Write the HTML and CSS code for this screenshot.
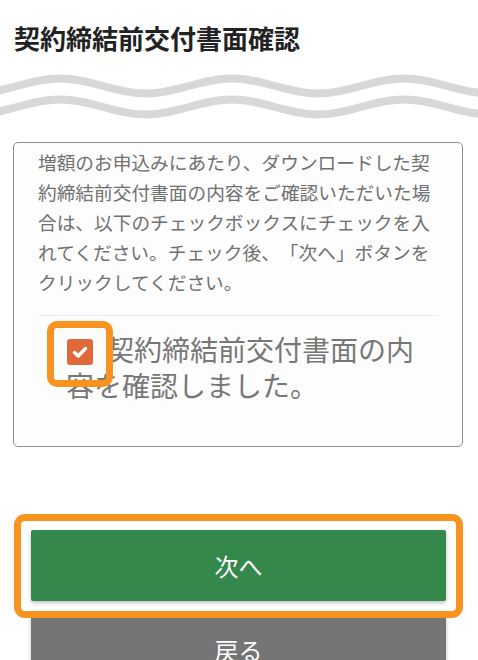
FILE: index.html
```html
<!DOCTYPE html>
<html lang="ja">
<head>
<meta charset="utf-8">
<title>契約締結前交付書面確認</title>
<link rel="stylesheet" href="styles.css">
</head>
<body>
<h1 class="title">契約締結前交付書面確認</h1>
<div class="waves">
  <svg width="478" height="70" viewBox="0 0 478 70" aria-hidden="true">
    <g fill="none" stroke="#d8d8d8" stroke-width="8">
      <path d="M -26 37.5 C 5.3 37.5 28.7 22.5 60 22.5 S 114.7 37.5 146 37.5 S 200.7 22.5 232 22.5 S 286.7 37.5 318 37.5 S 372.7 22.5 404 22.5 S 458.7 37.5 490 37.5"/>
      <path transform="translate(0 21)" d="M -26 37.5 C 5.3 37.5 28.7 22.5 60 22.5 S 114.7 37.5 146 37.5 S 200.7 22.5 232 22.5 S 286.7 37.5 318 37.5 S 372.7 22.5 404 22.5 S 458.7 37.5 490 37.5"/>
    </g>
  </svg>
</div>
<section class="card">
  <p class="notice">増額のお申込みにあたり、ダウンロードした契約締結前交付書面の内容をご確認いただいた場合は、以下のチェックボックスにチェックを入れてください。チェック後、「次へ」ボタンをクリックしてください。</p>
  <hr class="sep">
  <label class="agree"><span class="checkbox"><svg width="26" height="26" viewBox="0 0 26 26" aria-hidden="true"><path d="M7.5 13.5 L11.2 17 L18.5 9.5" fill="none" stroke="#fff" stroke-width="3.4" stroke-linecap="round" stroke-linejoin="round"/></svg><span class="highlight"></span></span>契約締結前交付書面の内容を確認しました。</label>
</section>
<div class="actions">
  <div class="btn-wrap">
    <button class="btn next" type="button">次へ</button>
    <span class="highlight frame"></span>
  </div>
  <button class="btn back" type="button">戻る</button>
</div>
</body>
</html>
```
FILE: styles.css
```css
html, body {
  margin: 0;
  padding: 0;
  background: #ffffff;
}
body {
  width: 478px;
  font-family: "Noto Sans CJK JP", "Noto Sans", sans-serif;
  overflow: hidden;
  text-spacing-trim: space-all;
}
.title {
  margin: 0;
  padding: 20px 0 0 14px;
  font-size: 26px;
  line-height: 36px;
  font-weight: 700;
  color: #222222;
}
.waves {
  height: 70px;
}
.waves svg {
  display: block;
}
.card {
  margin: 16px 15px 0 13px;
  padding: 4px 24px 43px 24px;
  border: 1px solid #8f8f8f;
  border-radius: 5px;
  background: #fdfdfd;
}
.notice {
  margin: 0;
  font-size: 18.7px;
  line-height: 30px;
  color: #707070;
}
.sep {
  margin: 18px 0 15px;
  height: 0;
  border: 0;
  border-top: 1px solid #ececec;
}
.agree {
  display: block;
  padding-left: 28px;
  font-size: 28px;
  line-height: 36px;
  color: #777777;
}
.checkbox {
  position: relative;
  display: inline-block;
  width: 26px;
  height: 26px;
  margin: 0 13px 0 1px;
  vertical-align: -4px;
  background: #e0693b;
  border-radius: 3px;
}
.checkbox svg {
  display: block;
}
.highlight {
  position: absolute;
  left: -20px;
  top: -18px;
  width: 66px;
  height: 66px;
  box-sizing: border-box;
  border: 7px solid #f7931e;
  border-radius: 10px;
}
.actions {
  margin-top: 83px;
  padding: 0 32px 0 31px;
  display: flex;
  flex-direction: column;
  gap: 13px;
}
.btn-wrap {
  position: relative;
}
.btn {
  display: block;
  width: 100%;
  height: 71px;
  border: 0;
  border-radius: 2px;
  font-family: "Noto Sans CJK JP", "Noto Sans", sans-serif;
  font-size: 24px;
  color: #ffffff;
  box-shadow: 0 2px 4px rgba(0, 0, 0, 0.25);
}
.next {
  background: #35884b;
}
.back {
  background: #757575;
}
.frame {
  left: -17px;
  top: -16px;
  right: -17px;
  bottom: -17px;
  width: auto;
  height: auto;
  border-radius: 11px;
}
```
